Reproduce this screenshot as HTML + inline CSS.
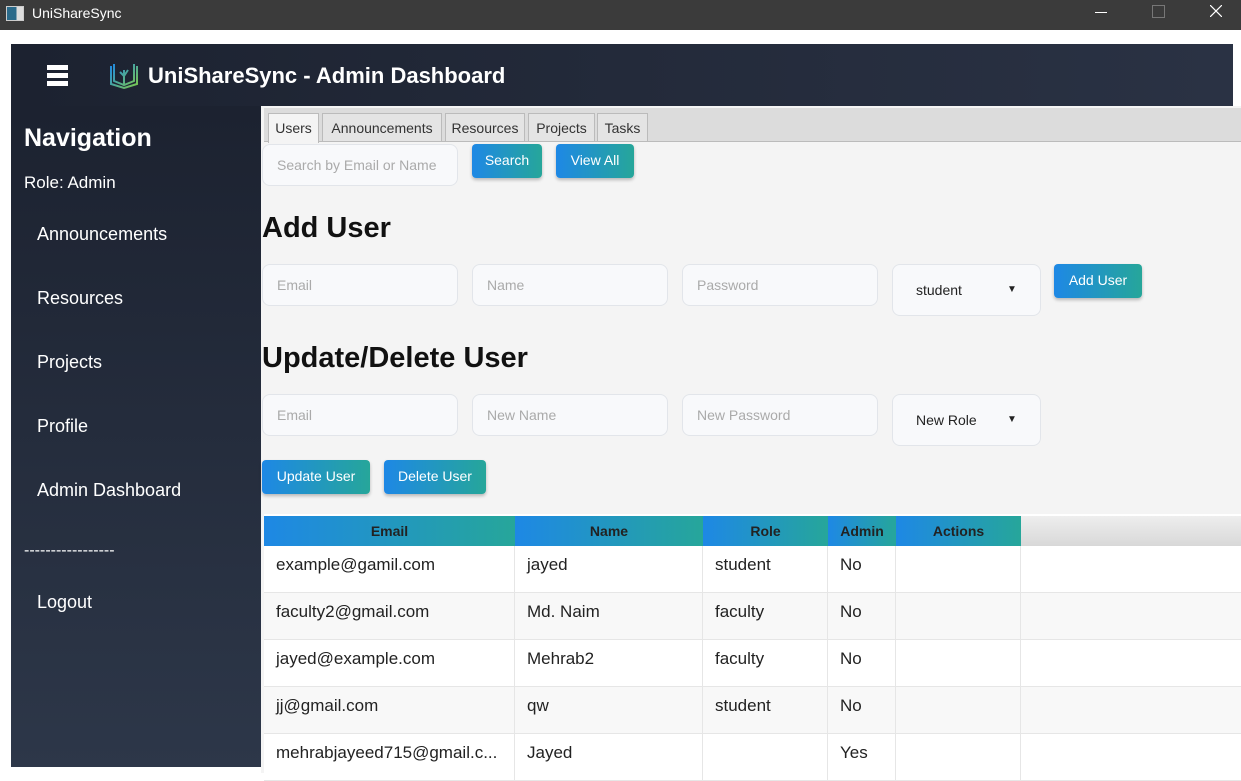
<!DOCTYPE html><html><head><style>
body{margin:0;width:1241px;height:773px;overflow:hidden;background:#fff;font-family:"Liberation Sans",sans-serif;position:relative}
.a{position:absolute}
.tb{left:0;top:0;width:1241px;height:30px;background:#3b3b3b;color:#fff;font-size:14px}
.hdr{left:11px;top:44px;width:1222px;height:62px;background:linear-gradient(90deg,#1c2230,#2a3244)}
.side{left:11px;top:106px;width:250px;height:661px;background:linear-gradient(180deg,#1c2230,#2d3749)}
.side div{position:absolute;color:#fff;font-size:18px}
.main{left:261px;top:106px;width:980px;height:667px;background:#f4f4f4}
.tab{top:113px;height:28px;background:#e4e4e4;border:1px solid #bbb;border-bottom:none;font-size:14px;color:#333;line-height:28px;text-align:center;box-sizing:border-box}
.inp{background:#f8f9fb;border:1px solid #e2e5ea;border-radius:8px;height:42px;box-sizing:border-box;color:#aaa;font-size:14px;padding:0 14px;line-height:40px}
.btn{background:linear-gradient(90deg,#1e88e5,#26a69a);color:#fff;font-size:14px;border-radius:4px;text-align:center;box-shadow:0 2px 3px rgba(0,0,0,.25)}
h2{position:absolute;margin:0;font-size:29px;color:#111;font-weight:bold}
.th{top:516px;height:30px;background:linear-gradient(90deg,#1e88e5,#26a69a);font-weight:bold;font-size:14px;color:#222;text-align:center;line-height:30px;box-sizing:border-box}
.row{left:264px;width:977px;height:47px;border-bottom:1px solid #e6e6e6;box-sizing:border-box}
.c{position:absolute;top:0;height:47px;border-right:1px solid #e6e6e6;font-size:17px;color:#222;line-height:38px;padding-left:12px;box-sizing:border-box;white-space:nowrap;overflow:hidden}
</style></head><body>
<div class="a tb"><div class="a" style="left:6px;top:6px;width:16px;height:13px;border:1px solid #ccc;background:linear-gradient(90deg,#2a6a8a 60%,#ddd 60%)"></div><span class="a" style="left:32px;top:5px">UniShareSync</span>
<span class="a" style="left:1095px;top:12px;width:12px;height:1px;background:#fff"></span><span class="a" style="left:1152px;top:5px;width:11px;height:11px;border:1px solid #777"></span>
<svg class="a" style="left:1210px;top:5px" width="12" height="12"><path d="M0 0L12 12M12 0L0 12" stroke="#fff" stroke-width="1.2"/></svg></div>
<div class="a hdr">
<div class="a" style="left:36px;top:21px;width:21px;height:5px;background:#fff;box-shadow:0 8px 0 #fff,0 16px 0 #fff"></div>
<svg class="a" style="left:98px;top:18px" width="30" height="28" viewBox="0 0 30 28"><defs><linearGradient id="g" x1="0" y1="0" x2="1" y2="1"><stop offset="0" stop-color="#1e88e5"/><stop offset="1" stop-color="#7cc84a"/></linearGradient></defs><path d="M2 4v18l13 4 13-4V4M5 2v17l10 4 10-4V2M15 8v15M11 10l4 4 4-6" fill="none" stroke="url(#g)" stroke-width="2"/></svg>
<div class="a" style="left:137px;top:19px;color:#fff;font-size:22px;font-weight:bold">UniShareSync - Admin Dashboard</div></div>
<div class="a side">
<div style="left:13px;top:18px;font-size:25px;font-weight:bold">Navigation</div>
<div style="left:13px;top:67px;font-size:17px">Role: Admin</div>
<div style="left:26px;top:118px">Announcements</div>
<div style="left:26px;top:182px">Resources</div>
<div style="left:26px;top:246px">Projects</div>
<div style="left:26px;top:310px">Profile</div>
<div style="left:26px;top:374px">Admin Dashboard</div>
<div style="left:13px;top:436px;font-size:16px">-----------------</div>
<div style="left:26px;top:486px">Logout</div></div>
<div class="a main"></div>
<div class="a" style="left:264px;top:141px;width:977px;height:1px;background:#bbb"></div>
<div class="a" style="left:264px;top:108px;width:977px;height:33px;background:#dcdcdc"></div>
<div class="a tab" style="left:268px;width:51px;background:#f4f4f4;height:30px">Users</div>
<div class="a tab" style="left:322px;width:120px">Announcements</div>
<div class="a tab" style="left:445px;width:80px">Resources</div>
<div class="a tab" style="left:528px;width:67px">Projects</div>
<div class="a tab" style="left:597px;width:51px">Tasks</div>
<div class="a inp" style="left:262px;top:144px;width:196px">Search by Email or Name</div>
<div class="a btn" style="left:472px;top:144px;width:70px;height:34px;line-height:32px">Search</div>
<div class="a btn" style="left:556px;top:144px;width:78px;height:34px;line-height:32px">View All</div>
<h2 style="left:262px;top:212px">Add User</h2>
<div class="a inp" style="left:262px;top:264px;width:196px">Email</div>
<div class="a inp" style="left:472px;top:264px;width:196px">Name</div>
<div class="a inp" style="left:682px;top:264px;width:196px">Password</div>
<div class="a inp" style="left:892px;top:264px;width:149px;height:52px;line-height:50px;color:#222;padding-left:23px">student<span class="a" style="left:114px;top:0;font-size:10px">▼</span></div>
<div class="a btn" style="left:1054px;top:264px;width:88px;height:34px;line-height:32px">Add User</div>
<h2 style="left:262px;top:342px">Update/Delete User</h2>
<div class="a inp" style="left:262px;top:394px;width:196px">Email</div>
<div class="a inp" style="left:472px;top:394px;width:196px">New Name</div>
<div class="a inp" style="left:682px;top:394px;width:196px">New Password</div>
<div class="a inp" style="left:892px;top:394px;width:149px;height:52px;line-height:50px;color:#222;padding-left:23px">New Role<span class="a" style="left:114px;top:0;font-size:10px">▼</span></div>
<div class="a btn" style="left:262px;top:460px;width:108px;height:34px;line-height:32px">Update User</div>
<div class="a btn" style="left:384px;top:460px;width:102px;height:34px;line-height:32px">Delete User</div>
<div class="a" style="left:264px;top:514px;width:977px;height:259px;background:#fff"></div>
<div class="a th" style="left:264px;width:251px">Email</div>
<div class="a th" style="left:515px;width:188px">Name</div>
<div class="a th" style="left:703px;width:125px">Role</div>
<div class="a th" style="left:828px;width:68px">Admin</div>
<div class="a th" style="left:896px;width:125px">Actions</div>
<div class="a" style="left:1021px;top:516px;width:220px;height:30px;background:linear-gradient(#eee,#d8d8d8)"></div>
<div class="a row" style="top:546px;background:#fff"><div class="c" style="left:0;width:251px">example@gamil.com</div><div class="c" style="left:251px;width:188px">jayed</div><div class="c" style="left:439px;width:125px">student</div><div class="c" style="left:564px;width:68px">No</div><div class="c" style="left:632px;width:125px"></div></div>
<div class="a row" style="top:593px;background:#f8f8f8"><div class="c" style="left:0;width:251px">faculty2@gmail.com</div><div class="c" style="left:251px;width:188px">Md. Naim</div><div class="c" style="left:439px;width:125px">faculty</div><div class="c" style="left:564px;width:68px">No</div><div class="c" style="left:632px;width:125px"></div></div>
<div class="a row" style="top:640px;background:#fff"><div class="c" style="left:0;width:251px">jayed@example.com</div><div class="c" style="left:251px;width:188px">Mehrab2</div><div class="c" style="left:439px;width:125px">faculty</div><div class="c" style="left:564px;width:68px">No</div><div class="c" style="left:632px;width:125px"></div></div>
<div class="a row" style="top:687px;background:#f8f8f8"><div class="c" style="left:0;width:251px">jj@gmail.com</div><div class="c" style="left:251px;width:188px">qw</div><div class="c" style="left:439px;width:125px">student</div><div class="c" style="left:564px;width:68px">No</div><div class="c" style="left:632px;width:125px"></div></div>
<div class="a row" style="top:734px;background:#fff"><div class="c" style="left:0;width:251px">mehrabjayeed715@gmail.c...</div><div class="c" style="left:251px;width:188px">Jayed</div><div class="c" style="left:439px;width:125px"></div><div class="c" style="left:564px;width:68px">Yes</div><div class="c" style="left:632px;width:125px"></div></div>
</body></html>
